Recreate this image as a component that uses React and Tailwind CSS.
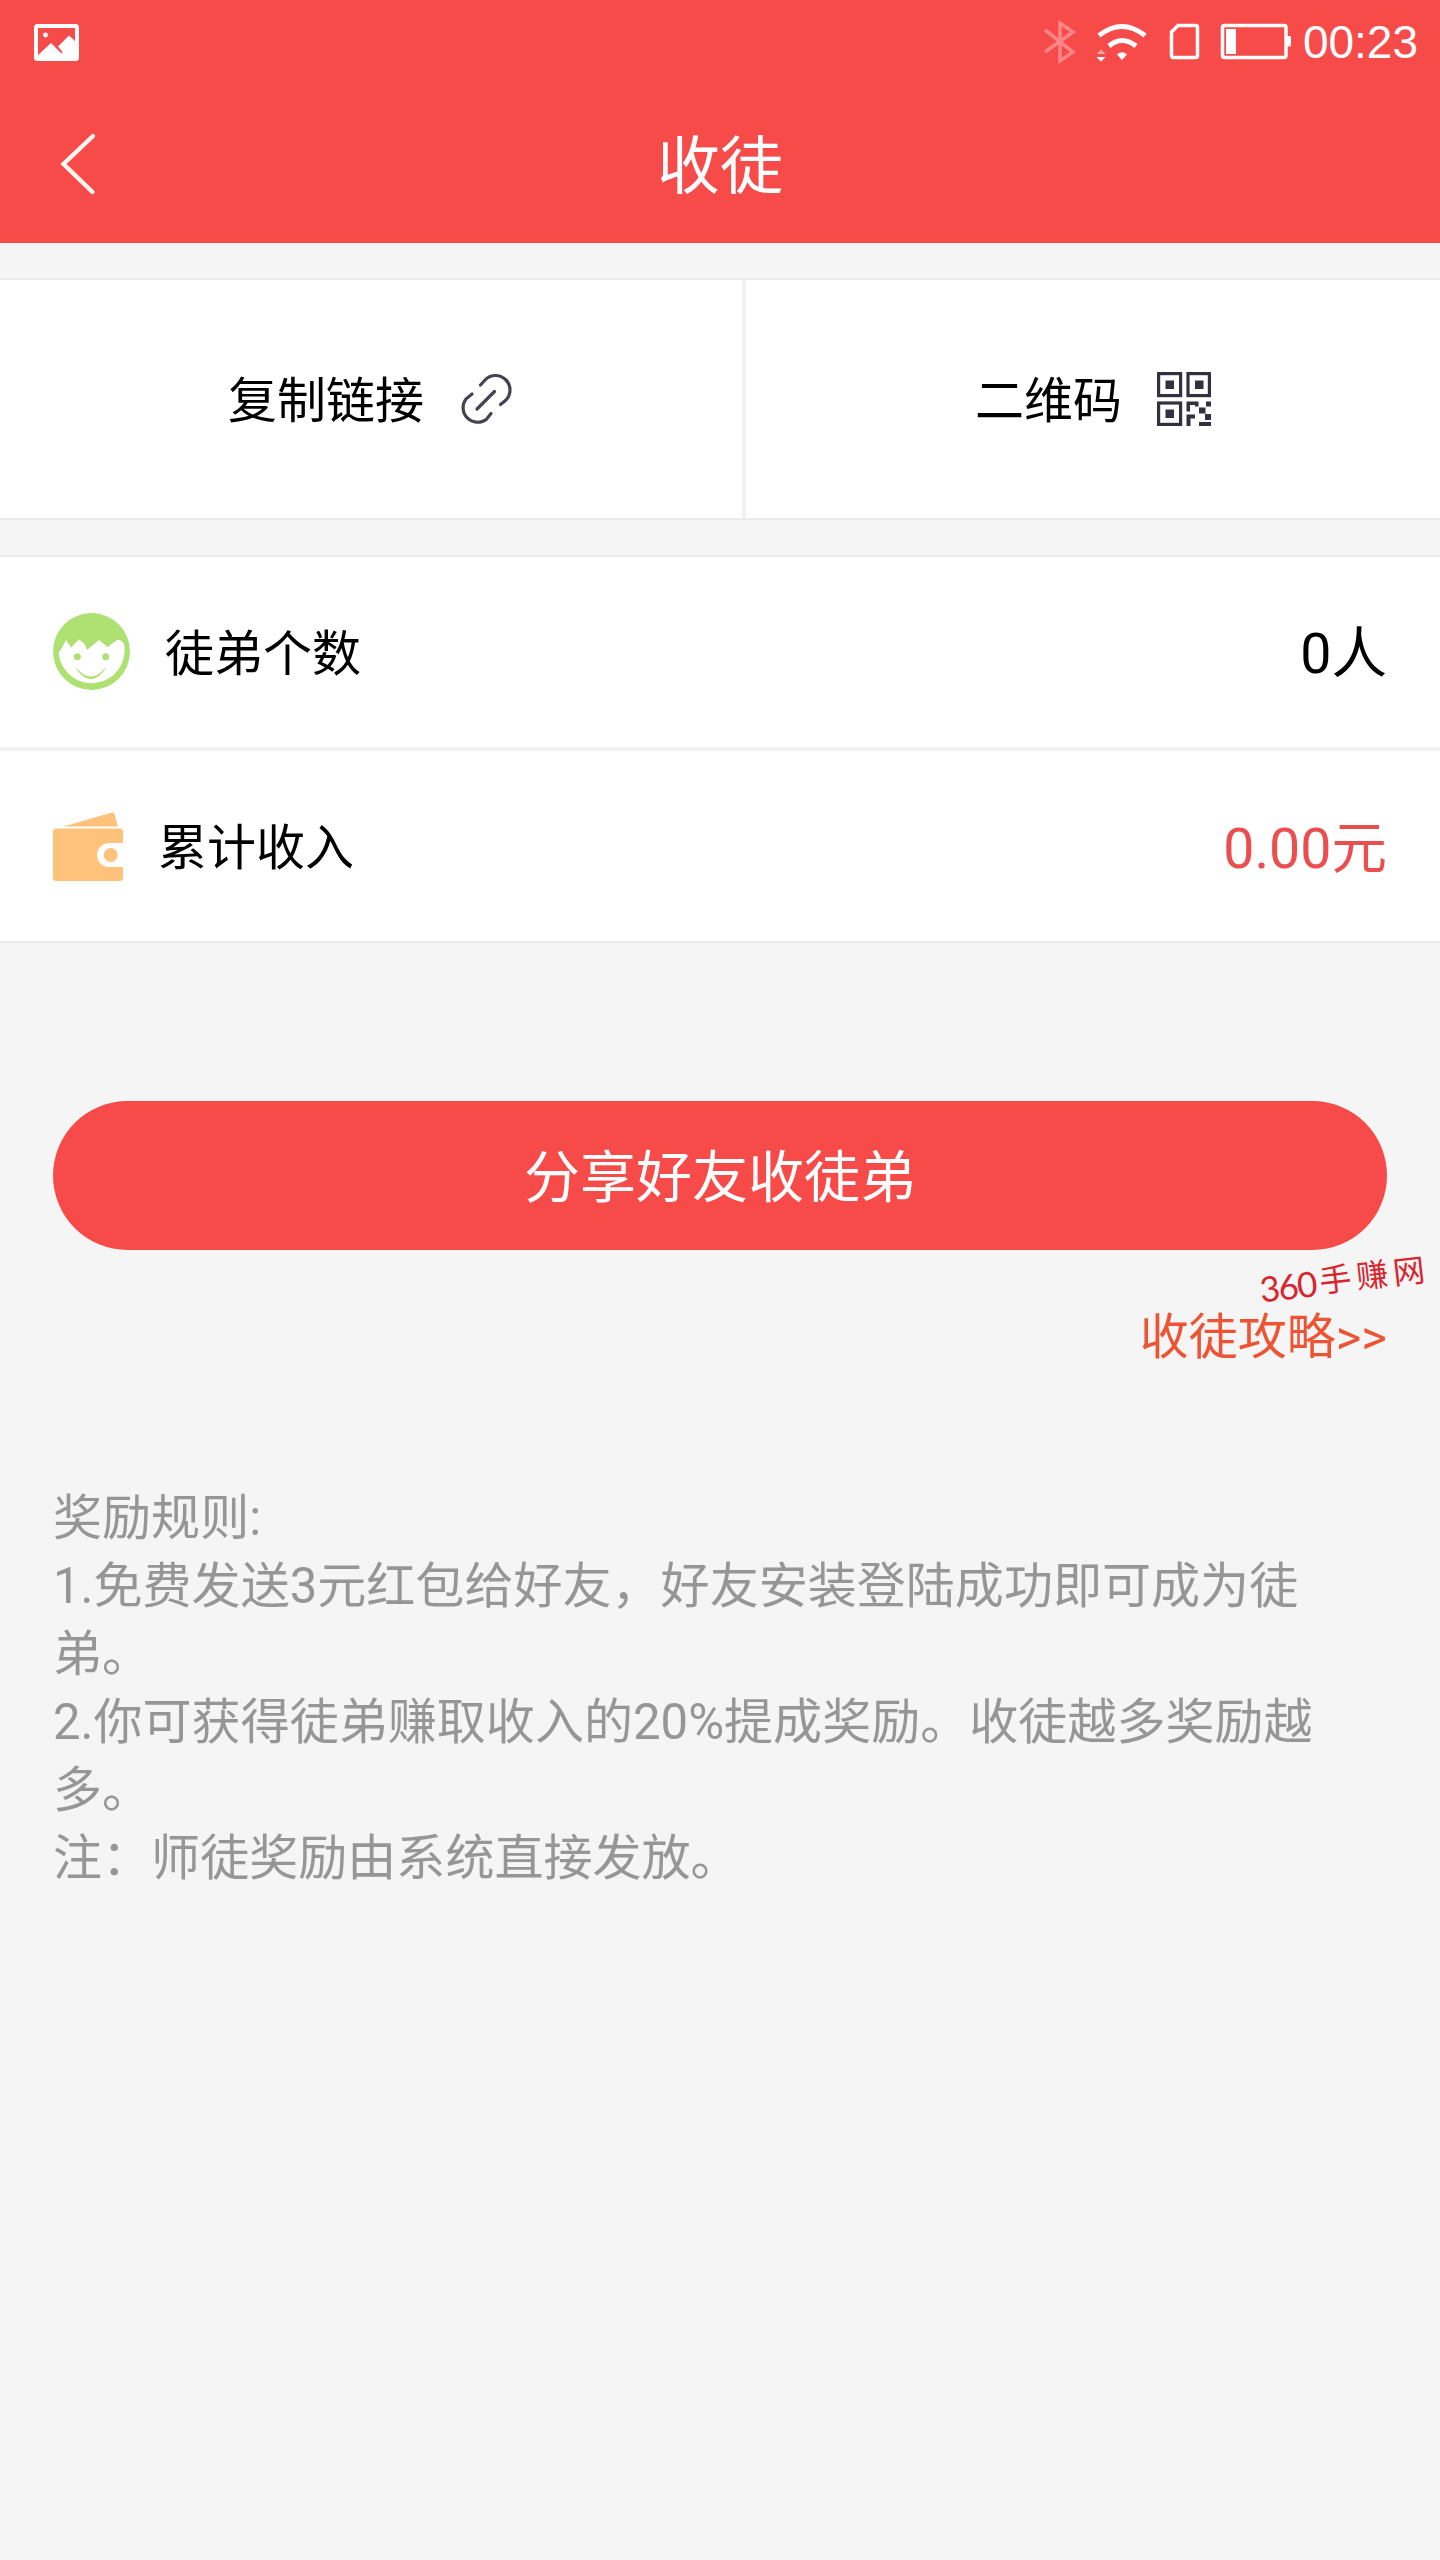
import { useState } from 'react'

const rules = [
    '奖励规则:',
    '1.免费发送3元红包给好友，好友安装登陆成功即可成为徒弟。',
    '2.你可获得徒弟赚取收入的20%提成奖励。收徒越多奖励越多。',
    '注：师徒奖励由系统直接发放。',
]

function StatusBar() {
    return (
        <div className="h-[84px] flex items-center justify-between pl-[34px] pr-[22px] text-white">
            <svg width="45" height="37" viewBox="0 0 45 37">
                <rect x="2" y="2" width="41" height="33" rx="1.5" fill="none" stroke="#fff" strokeWidth="4" />
                <circle cx="11.5" cy="11" r="2.4" fill="#fff" />
                <path d="M3 32 17 19 27.500 29.500 28.500 28 24 22.500 35 11.500 42 18V35H3Z" fill="#fff" />
            </svg>
            <div className="flex items-center">
                <svg width="283" height="84" viewBox="0 0 283 84" fill="none">
                    <path d="M25 30 53 52 40 61V23L53 32 25 52" stroke="#ff8586" strokeWidth="3.500" />
                    <path d="M79 35.500Q102 17.500 125 35.500" stroke="#fff" strokeWidth="5" />
                    <path d="M89 46Q102 35 116 46" stroke="#fff" strokeWidth="5" />
                    <path d="M97 54.500Q102 50 107 54.500L102 60Z" fill="#fff" />
                    <path d="M76.500 54 81 49.500 85.500 54Z" fill="#ffa5a6" />
                    <path d="M76.500 57H85.500L81 61.500Z" fill="#fff" />
                    <path d="M158 25.500H175.500a2 2 0 0 1 2 2V55.500a2 2 0 0 1-2 2H153.500a2 2 0 0 1-2-2V32Z" stroke="#fff" strokeWidth="3.5" />
                    <rect x="202.500" y="25.500" width="63.500" height="32" rx="2" stroke="#fff" strokeWidth="3.500" />
                    <rect x="206" y="29" width="10" height="25" fill="#fff" />
                    <rect x="267" y="36" width="4" height="10.500" rx="1" fill="#fff" />
                </svg>
                <span className="pt-px font-['Liberation_Sans',sans-serif] text-[46px]">00:23</span>
            </div>
        </div>
    )
}

function LinkIcon() {
    return (
        <svg width="54" height="54" viewBox="0 0 54 54" fill="none" stroke="#45434f" strokeWidth="3.200" strokeLinecap="round">
            <path d="M21.500 13 26.500 7.500A14.500 14.500 0 0 1 47 28L41.500 32.500" />
            <path d="M13 22 7.200 26.800A14.500 14.500 0 0 0 27.500 47.200L32 41.500" />
            <path d="M18 37 35.500 19.500" />
        </svg>
    )
}

function QrIcon() {
    return (
        <svg width="54" height="54" viewBox="0 0 54 54" fill="#33313f">
            <g fill="none" stroke="#33313f" strokeWidth="3.200">
                <rect x="1.600" y="1.600" width="22" height="22" />
                <rect x="31" y="1.600" width="21.400" height="22" />
                <rect x="1.600" y="31" width="22" height="21.400" />
            </g>
            <rect x="8.500" y="8.500" width="8.500" height="8.500" />
            <rect x="38" y="8.500" width="8.500" height="8.500" />
            <rect x="8.500" y="37.500" width="8.500" height="8.500" />
            <path d="M29.500 29.500H41.500V34.500H38V33H33V39.500H29.500ZM49 29.500H54V34.500H49ZM42 35.500H48.500V42H54V48H48V41.500H42ZM29.500 42.500H38V46.500H33.500V54H29.500ZM42 50H54V54H42Z" />
        </svg>
    )
}

function FaceIcon() {
    return (
        <svg width="77" height="77" viewBox="0 0 77 77" className="-mt-px">
            <circle cx="38.500" cy="38.500" r="38.500" fill="#aee072" />
            <path d="M5.700 40Q9 35 13 27L18 34.500 26 26.500 30.500 30Q33 33 34 37L46 27 54.500 34 64.500 26.800Q69 27 71 31A33 33 0 1 1 5.700 40Z" fill="#fff" />
            <circle cx="24.300" cy="43.700" r="3.500" fill="#aee072" />
            <circle cx="52.700" cy="43.700" r="3.500" fill="#aee072" />
            <path d="M22 54Q38 78.500 53.500 54L51.500 55.500Q38 71.500 24 55.500Z" fill="#aee072" />
        </svg>
    )
}

function WalletIcon() {
    return (
        <svg width="70" height="70" viewBox="0 0 70 70" fill="#ffc27a" className="mt-[2px]">
            <path d="M10.500 14.500 59 .5Q61 0 61.500 2L65 14.500Z" />
            <path d="M3 16.500H67a3 3 0 0 1 3 3V31H56a12 12 0 0 0 0 24H70V66a3 3 0 0 1-3 3H3a3 3 0 0 1-3-3V19.500a3 3 0 0 1 3-3Z" />
            <circle cx="57.700" cy="43" r="7" />
        </svg>
    )
}

export default function App() {
    const [apprentices] = useState(0)
    const [income] = useState(0)

    return (
        <div className="h-[2560px] overflow-hidden bg-[#f5f5f5] text-black font-[Roboto,'Noto_Sans_CJK_SC',sans-serif]">
            <header className="h-[243px] bg-[#f74b4a]">
                <StatusBar />
                <div className="h-[159px] grid grid-cols-3 items-center px-[60px]">
                    <button className="justify-self-start">
                        <svg width="38" height="64" viewBox="0 0 38 64" fill="none" stroke="#fff4f0" strokeWidth="4.400" strokeLinecap="round">
                            <path d="M33 4 3.500 32 32.500 60" />
                        </svg>
                    </button>
                    <h1 className="pt-[7px] text-center text-[63px] text-white">收徒</h1>
                </div>
            </header>

            <section className="mt-[35px] h-[242px] flex bg-white border-y-2 border-[#ebebeb] text-[49px]">
                <button className="w-[746px] flex items-center justify-center gap-[35px] pr-px border-r-4 border-[#f2f2f2]">
                    <span className="pt-[5px]">复制链接</span>
                    <LinkIcon />
                </button>
                <button className="flex-1 flex items-center justify-center gap-[35px]">
                    <span className="pt-[5px]">二维码</span>
                    <QrIcon />
                </button>
            </section>

            <section className="mt-[35px] bg-white border-y-2 border-[#ebebeb]">
                <div className="h-[190px] flex items-center px-[53px]">
                    <FaceIcon />
                    <span className="ml-[35px] pt-[5px] text-[49px]">徒弟个数</span>
                    <span className="ml-auto pt-[6px] text-[55.5px]">{apprentices}人</span>
                </div>
                <div className="h-[194px] flex items-center px-[53px] border-t-4 border-[#f3f3f3]">
                    <WalletIcon />
                    <span className="ml-[35px] pt-[6px] text-[49px]">累计收入</span>
                    <span className="ml-auto pt-[7px] text-[55.5px] text-[#ea4e4e]">{income.toFixed(2)}元</span>
                </div>
            </section>

            <div className="px-[53px] pt-[158px]">
                <button className="w-full h-[149px] pt-[4px] rounded-full bg-[#f74b4a] text-[56px] text-white">
                    分享好友收徒弟
                </button>
                <div className="relative h-[234px] pt-[54px] flex items-start justify-end">
                    <a className="text-[49px] leading-[68px] text-[#ee5433]">收徒攻略&gt;&gt;</a>
                    <div className="absolute top-[9px] -right-[43px] flex items-center -rotate-[6.500deg] leading-[40px] text-[#d9252f]">
                        <span className="font-[Lato,sans-serif] text-[35px] tracking-[-1.5px]">360</span>
                        <span className="ml-1 text-[32px] tracking-[5px]">手赚网</span>
                    </div>
                </div>
                <div className="pr-10 text-[49.05px] leading-[68px] text-[#969696]">
                    {rules.map((r) => <p key={r}>{r}</p>)}
                </div>
            </div>
        </div>
    )
}
